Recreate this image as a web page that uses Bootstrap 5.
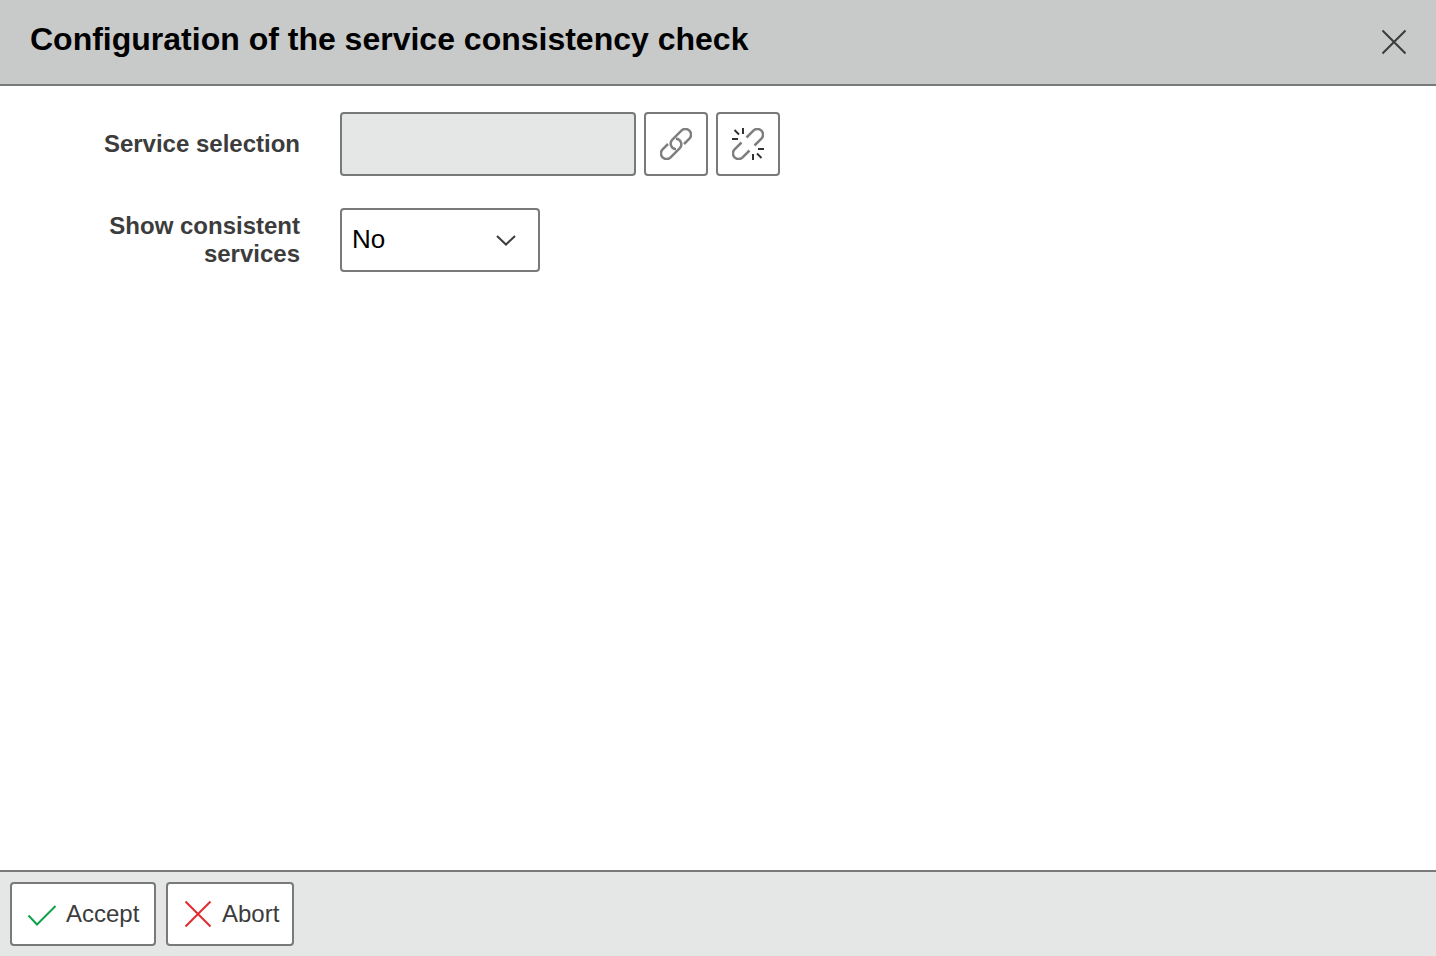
<!DOCTYPE html>
<html lang="en">
<head>
<meta charset="utf-8">
<meta name="viewport" content="width=device-width, initial-scale=1">
<title>Configuration of the service consistency check</title>
<link href="https://cdn.jsdelivr.net/npm/bootstrap@5.3.0/dist/css/bootstrap.min.css" rel="stylesheet">
<style>
  body { font-family: "Liberation Sans", Arial, sans-serif; font-size: 24px; line-height: 28px; color: #3c3c3c; background: #fff; }
  .dialog-head { background: #c8cac9; border-bottom: 2px solid #797979; padding: 20px 30px 26px; color: #000; }
  .dialog-head h1 { font-size: 32px; line-height: 38px; font-weight: 700; }
  .dialog-foot { background: #e5e7e6; border-top: 2px solid #797979; padding: 10px; gap: 10px; }
  .dialog-body { padding: 26px 20px; gap: 32px; }
  .field-label { width: 280px; font-weight: 700; text-align: right; padding-left: 60px; }
  .field-row { gap: 40px; }
  .ctl { height: 64px; border: 2px solid #797979; border-radius: 4px; font-size: 24px; line-height: 28px; color: #3c3c3c; background-color: #fff; }
  .ctl:hover, .ctl:active { border-color: #3c3c3c !important; }
  .service-box.form-control { width: 296px; background: #e5e7e6; }
  .icon-btn { width: 64px; padding: 0; }
  .choice.form-select { width: 200px; font-size: 26px; color: #000; padding: 0 50px 2px 10px; background-position: right 16px center; background-size: 32px 32px;
    background-image: url("data:image/svg+xml,%3Csvg xmlns='http://www.w3.org/2000/svg' viewBox='0 0 32 32' fill='none' stroke='%233c3c3c' stroke-width='2'%3E%3Cpath d='M7 12 16 20.5 25 12'/%3E%3C/svg%3E"); }
  .action { min-width: 128px; padding: 0 13px 0 14px; gap: 8px; }
  .action-accept { min-width: 146px; }
  .ctl svg, .dialog-head svg { display: block; }
</style>
</head>
<body class="d-flex flex-column min-vh-100">
<header class="dialog-head d-flex align-items-start justify-content-between">
  <h1 class="m-0">Configuration of the service consistency check</h1>
  <button type="button" class="btn p-0 border-0 mt-2" aria-label="Close">
    <svg width="24" height="28" viewBox="0 0 24 28" fill="none" stroke="#3c3c3c" stroke-width="2"><path d="M.5 2.5 23.5 25.5M23.5 2.5.5 25.5"/></svg>
  </button>
</header>
<main class="flex-grow-1">
  <form id="config" class="dialog-body d-flex flex-column">
    <div class="field-row d-flex align-items-center">
      <label class="field-label" for="service">Service selection</label>
      <div class="d-flex gap-2">
        <input id="service" type="text" class="ctl service-box form-control" readonly>
        <button type="button" class="ctl icon-btn btn d-flex align-items-center justify-content-center" aria-label="Link service">
          <svg width="32" height="32" viewBox="0 0 32 32" fill="none" stroke="#7f7f7f" stroke-width="2.5">
            <path d="M16 21.2A5.6 5.6 0 0 1 12.4 11.6L21.4 2.6A5.6 5.6 0 0 1 29.4 10.6L24 16"/>
            <path d="M16 10.8A5.6 5.6 0 0 1 19.6 20.4L10.600 29.4A5.6 5.6 0 0 1 2.6 21.4L8 16"/>
          </svg>
        </button>
        <button type="button" class="ctl icon-btn btn d-flex align-items-center justify-content-center" aria-label="Unlink service">
          <svg width="32" height="32" viewBox="0 0 32 32" fill="none" stroke="#7f7f7f" stroke-width="2.5">
            <path d="M14.5 9.5 21.4 2.6A5.6 5.6 0 0 1 29.4 10.6L22.5 17.5M17.5 22.5 10.6 29.4A5.6 5.6 0 0 1 2.6 21.4L9.5 14.5"/>
            <path stroke="#333" stroke-width="2" d="M11 0V6M2.5 2 7 6.5M0 11H6M21 32V26M29.5 30 25 25.5M32 21H26"/>
          </svg>
        </button>
      </div>
    </div>
    <div class="field-row d-flex align-items-center">
      <label class="field-label" for="consistent">Show consistent services</label>
      <select id="consistent" class="ctl choice form-select"><option>No</option><option>Yes</option></select>
    </div>
  </form>
</main>
<footer class="dialog-foot d-flex">
  <button type="submit" form="config" class="ctl action action-accept btn d-flex align-items-center">
    <svg width="32" height="32" viewBox="0 0 32 32" fill="none" stroke="#12a14b" stroke-width="2"><path d="M2.5 17.5 11 26.500 29.5 8"/></svg>Accept
  </button>
  <button type="button" class="ctl action btn d-flex align-items-center">
    <svg width="32" height="32" viewBox="0 0 32 32" fill="none" stroke="#e52a2d" stroke-width="2"><path d="M3.5 3.5 28.5 28.5M28.5 3.5 3.5 28.5"/></svg>Abort
  </button>
</footer>
<script src="https://cdn.jsdelivr.net/npm/bootstrap@5.3.0/dist/js/bootstrap.bundle.min.js"></script>
</body>
</html>
